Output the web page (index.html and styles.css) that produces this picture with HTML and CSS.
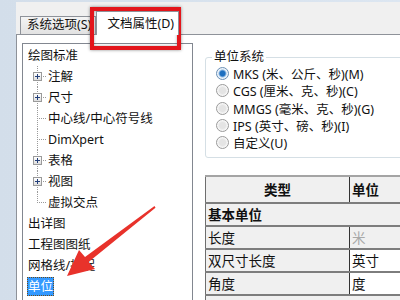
FILE: index.html
```html
<!DOCTYPE html>
<html lang="zh-CN">
<head>
    <meta charset="UTF-8">
    <title>文档属性 - 单位</title>
    <link rel="stylesheet" href="styles.css">
</head>
<body>
    <div class="window">
        <div class="tabs">
            <div class="tab">系统选项(S)</div>
            <div class="tab active">文档属性(D)</div>
        </div>
        <div class="panel">
            <div class="tree">
                <div class="node root">绘图标准</div>
                <div class="node child"><span class="branch"><span class="plus"></span></span>注解</div>
                <div class="node child"><span class="branch"><span class="plus"></span></span>尺寸</div>
                <div class="node child"><span class="branch"></span>中心线/中心符号线</div>
                <div class="node child"><span class="branch"></span>DimXpert</div>
                <div class="node child"><span class="branch"><span class="plus"></span></span>表格</div>
                <div class="node child"><span class="branch"><span class="plus"></span></span>视图</div>
                <div class="node child last"><span class="branch"></span>虚拟交点</div>
                <div class="node root">出详图</div>
                <div class="node root">工程图图纸</div>
                <div class="node root">网格线/捕捉</div>
                <div class="node root"><span class="selected">单位</span></div>
            </div>

            <div class="content">
                <fieldset class="group">
                    <legend>单位系统</legend>
                    <div class="radio"><span class="dot checked"></span>MKS (米、公斤、秒)(M)</div>
                    <div class="radio"><span class="dot"></span>CGS (厘米、克、秒)(C)</div>
                    <div class="radio"><span class="dot"></span>MMGS (毫米、克、秒)(G)</div>
                    <div class="radio"><span class="dot"></span>IPS (英寸、磅、秒)(I)</div>
                    <div class="radio"><span class="dot"></span>自定义(U)</div>
                </fieldset>

                <table class="units">
                    <tr class="head">
                        <th class="type">类型</th>
                        <th>单位</th>
                    </tr>
                    <tr class="category">
                        <td colspan="2">基本单位</td>
                    </tr>
                    <tr>
                        <td class="type">长度</td>
                        <td class="disabled">米</td>
                    </tr>
                    <tr>
                        <td class="type">双尺寸长度</td>
                        <td>英寸</td>
                    </tr>
                    <tr>
                        <td class="type">角度</td>
                        <td>度</td>
                    </tr>
                    <tr class="category">
                        <td colspan="2">质量/截面属性</td>
                    </tr>
                </table>
            </div>
        </div>
    </div>

    <!-- annotation overlays -->
    <div class="highlight"></div>
    <svg class="arrow" width="400" height="300" viewBox="0 0 400 300">
        <polygon points="67,276 79,250 85,257 154.5,206 155.5,207.8 88.6,262 95,269" fill="#e8322b"/>
    </svg>
</body>
</html>
```

FILE: styles.css
```css
body {
    margin: 0;
    width: 400px;
    height: 300px;
    overflow: hidden;
    position: relative;
    background: linear-gradient(to right, #d3deea, #dce6f1);
    font-family: "Noto Sans", "Noto Sans CJK SC", sans-serif;
    font-size: 12.5px;
    color: #111;
}
.window {
    margin: 2px 0 0 16px;
    height: 298px;
    background: #f0f0f0;
    display: flex;
    flex-direction: column;
}
.tabs {
    height: 32px;
    padding-left: 4px;
    display: flex;
    align-items: flex-end;
}
.tab {
    height: 17px;
    line-height: 16px;
    padding: 0 4px 0 6px;
    border: 1px solid #8e9299;
    border-bottom: none;
    background: linear-gradient(#f4f4f4, #e2e2e2);
    white-space: nowrap;
}
.tab.active {
    height: 24px;
    width: 83px;
    padding: 4px 0 0 10px;
    box-sizing: border-box;
    line-height: 16px;
    background: #fff;
    margin-bottom: -1px;
    position: relative;
    z-index: 1;
}
.panel {
    flex: 1;
    background: #fff;
    border-top: 1px solid #8e9299;
    border-left: 1px solid #8e9299;
    display: flex;
    min-height: 0;
}

/* tree */
.tree {
    width: 171px;
    box-sizing: border-box;
    margin: 8px 0 0 5px;
    padding-top: 1px;
    border: 1px solid #828790;
    border-bottom: none;
}
.node {
    height: 21px;
    line-height: 21px;
    display: flex;
    align-items: center;
    white-space: nowrap;
}
.node.root {
    padding-left: 5px;
}
.node.child {
    padding-left: 10px;
}
.branch {
    width: 15px;
    height: 21px;
    flex: none;
    display: flex;
    align-items: center;
    background-image:
        repeating-linear-gradient(to bottom, #9a9a9a 0 1px, transparent 1px 2px),
        repeating-linear-gradient(to right, #9a9a9a 0 1px, transparent 1px 2px);
    background-size: 1px 21px, 9px 1px;
    background-position: 4px 0, 4px 10px;
    background-repeat: no-repeat;
}
.last .branch {
    background-size: 1px 11px, 9px 1px;
}
.plus {
    width: 9px;
    height: 9px;
    box-sizing: border-box;
    border: 1px solid #9a9a9a;
    background:
        linear-gradient(#24407a, #24407a) center / 5px 1px no-repeat,
        linear-gradient(#24407a, #24407a) center / 1px 5px no-repeat,
        linear-gradient(#fff, #dedede);
}
.selected {
    margin-left: -1px;
    padding: 0 1px;
    height: 19px;
    line-height: 19px;
    background: #3399ff;
    color: #fff;
    outline: 1px dotted #6b4b1b;
    outline-offset: -1px;
}

/* right side */
.content {
    margin-left: 12px;
    padding-top: 14px;
    flex: 1;
    min-width: 0;
}
.group {
    margin: 0;
    width: 230px;
    padding: 0 0 6px 6px;
    border: 1px solid #d5dfe5;
    border-radius: 3px;
}
.group legend {
    padding: 0 2px;
    line-height: 16px;
}
.radio {
    height: 17.3px;
    display: flex;
    align-items: center;
    white-space: nowrap;
}
.dot {
    width: 13px;
    height: 13px;
    box-sizing: border-box;
    margin: 0 4px 0 4px;
    border: 1px solid #9a9a9a;
    border-radius: 50%;
    background: radial-gradient(circle, #e4e4e4 0 3px, #f7f7f7 5px);
}
.dot.checked {
    border-color: #6b8fb5;
    background: radial-gradient(circle, #1e6fc0 0 2.5px, #8fb9e3 3.5px, #eef4fa 4.5px);
}

/* unit table */
.units {
    margin-top: 17px;
    width: 260px;
    border-collapse: collapse;
    border-top: 2px solid #a4a4a4;
    border-left: 1px solid #6e6e6e;
    font-family: "Noto Sans CJK SC", sans-serif;
    font-size: 13.5px;
}
.units th,
.units td {
    padding: 0 2px;
    text-align: left;
    border-bottom: 2px solid #7d7d7d;
    height: 21px;
    line-height: 21px;
    white-space: nowrap;
    background: #fff;
}
.units .head th {
    height: 25px;
    background: #f0f0f0;
    font-weight: bold;
}
.units th.type {
    text-align: center;
}
.units .type {
    width: 139px;
    border-right: 1px solid #333;
    background: #f0f0f0;
}
.units .category td {
    background: #f0f0f0;
    font-weight: bold;
}
.units .disabled {
    background: #f0f0f0;
    color: #a8a8a8;
}

/* red annotation */
.highlight {
    position: absolute;
    left: 90px;
    top: 7px;
    width: 91px;
    height: 43px;
    box-sizing: border-box;
    border: 4px solid #e3151b;
    box-shadow: 0 0 3px rgba(0, 0, 0, 0.45), inset 0 0 3px rgba(0, 0, 0, 0.35);
}
.arrow {
    position: absolute;
    left: 0;
    top: 0;
    pointer-events: none;
}
```
